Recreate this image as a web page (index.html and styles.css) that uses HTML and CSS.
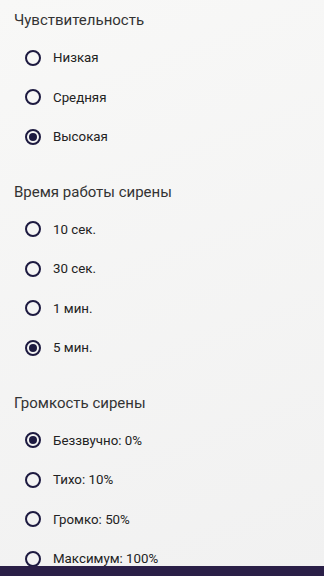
FILE: index.html
```html
<!DOCTYPE html>
<html lang="ru">
<head>
    <meta charset="UTF-8">
    <meta name="viewport" content="width=device-width, initial-scale=1.0">
    <title>Настройки</title>
    <link rel="stylesheet" href="styles.css">
</head>
<body>
    <div class="screen">
        <div class="settings">
            <div class="group">
                <h2>Чувствительность</h2>
                <label class="option"><input type="radio" name="sens"><span>Низкая</span></label>
                <label class="option"><input type="radio" name="sens"><span>Средняя</span></label>
                <label class="option"><input type="radio" name="sens" checked><span>Высокая</span></label>
            </div>
            <div class="group">
                <h2>Время работы сирены</h2>
                <label class="option"><input type="radio" name="time"><span>10 сек.</span></label>
                <label class="option"><input type="radio" name="time"><span>30 сек.</span></label>
                <label class="option"><input type="radio" name="time"><span>1 мин.</span></label>
                <label class="option"><input type="radio" name="time" checked><span>5 мин.</span></label>
            </div>
            <div class="group">
                <h2>Громкость сирены</h2>
                <label class="option"><input type="radio" name="vol" checked><span>Беззвучно: 0%</span></label>
                <label class="option"><input type="radio" name="vol"><span>Тихо: 10%</span></label>
                <label class="option"><input type="radio" name="vol"><span>Громко: 50%</span></label>
                <label class="option"><input type="radio" name="vol"><span>Максимум: 100%</span></label>
            </div>
        </div>
        <div class="nav-bar"></div>
    </div>
</body>
</html>
```

FILE: styles.css
```css
html, body {
    margin: 0;
    padding: 0;
}
body {
    font-family: Roboto, "Noto Sans", sans-serif;
    background: linear-gradient(160deg, #f8f8f7 0%, #f1f1f1 100%);
}
.screen {
    height: 576px;
    display: flex;
    flex-direction: column;
}
.settings {
    flex: 1;
    overflow: hidden;
    padding-top: 10px;
}
.group {
    margin-bottom: 25px;
}
h2 {
    margin: 0 0 8px 14px;
    height: 20px;
    line-height: 20px;
    font-size: 15px;
    font-weight: 400;
    color: #333333;
}
.option {
    display: flex;
    align-items: center;
    height: 39.5px;
    padding-left: 25px;
    font-size: 13.3px;
    color: #222222;
}
.option input {
    appearance: none;
    -webkit-appearance: none;
    margin: 0 12px 0 0;
    width: 16px;
    height: 16px;
    border: 2px solid #1d1a40;
    border-radius: 50%;
    box-sizing: border-box;
    display: flex;
    align-items: center;
    justify-content: center;
}
.option input:checked::after {
    content: "";
    width: 8px;
    height: 8px;
    border-radius: 50%;
    background: #1d1a40;
}
.nav-bar {
    height: 10px;
    background: #2a1f47;
}
```
